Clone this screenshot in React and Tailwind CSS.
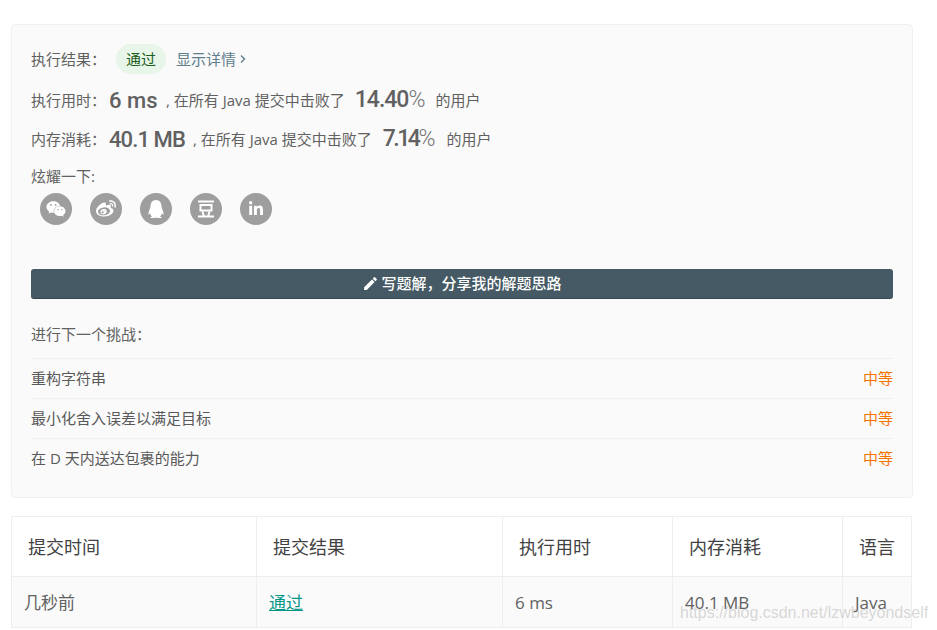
import React from "react";
import { FaWeixin, FaWeibo, FaQq, FaLinkedinIn } from "react-icons/fa";
import { MdEdit } from "react-icons/md";

const FONT = { fontFamily: '"Open Sans","Noto Sans CJK SC",sans-serif' };

function Douban() {
  return (
    <svg width="20" height="20" viewBox="0 0 20 20" fill="none" stroke="white" strokeWidth="2">
      <path d="M2 2.5h16" />
      <rect x="4.5" y="6" width="11" height="5.5" />
      <path d="M2 17.5h16M6.5 12.5l1.3 4.5M13.5 12.5l-1.3 4.5" />
    </svg>
  );
}

function Social({ children }) {
  return <div className="w-8 h-8 rounded-full bg-[#9e9e9e] flex items-center justify-center text-white">{children}</div>;
}

function Num({ children, className = "" }) {
  return <span className={`text-[22px] font-medium text-[#616161] font-['Roboto'] ${className}`}>{children}</span>;
}

function Pct({ v, className = "" }) {
  return (
    <span className={`text-[23px] text-[#616161] font-['Roboto'] font-medium ${className}`}>
      {v}<span className="font-light text-[#757575] tracking-normal">%</span>
    </span>
  );
}

function Next({ title }) {
  return (
    <div className="h-10 border-t border-[#f0f0f0] flex items-center justify-between text-[15px] text-[#595959]">
      <span>{title}</span>
      <span className="text-[#f27400]">中等</span>
    </div>
  );
}

const th = "border border-[#eeeeee] text-left font-normal text-[18px] text-[#424242] pl-4 pr-0 pt-[2px]";
const td = "border border-[#eeeeee] text-[17px] text-[#616161] pl-3 pt-[2px]";

export default function App() {
  return (
    <div style={FONT} className="relative w-[937px] h-[630px] overflow-hidden bg-white pt-6 pl-[11px]">
      <div className="w-[902px] h-[474px] rounded border border-[#f0f0f0] bg-[#fafafa] px-[19px] text-[15px] text-[#616161]">
        <div className="flex items-center h-[30px] mt-[19px]">
          <span className="w-[85px]">执行结果：</span>
          <span className="w-[50px] h-[30px] rounded-full bg-[#e8f5e9] text-[#1b5e20] flex items-center justify-center">通过</span>
          <span className="ml-[10px] text-[#607d8b]">显示详情</span>
          <svg width="8" height="10" viewBox="0 0 8 10" fill="none" stroke="#607d8b" strokeWidth="1.4" className="ml-[3px]"><path d="M2 1.5 5.5 5 2 8.5" /></svg>
        </div>
        <div className="flex items-center h-[39px] mt-[7px]">
          <span className="w-[78px]">执行用时：</span>
          <Num className="w-[57px]">6 ms</Num>
          <span>, 在所有 Java 提交中击败了</span>
          <span className="ml-[10px]"><Pct v="14.40" className="tracking-[-1px]" /></span>
          <span className="ml-[10px]">的用户</span>
        </div>
        <div className="flex items-center h-[39px]">
          <span className="w-[78px]">内存消耗：</span>
          <Num className="w-[84px] tracking-[-0.9px]">40.1 MB</Num>
          <span>, 在所有 Java 提交中击败了</span>
          <span className="ml-[11px]"><Pct v="7.14" className="tracking-[-2.5px]" /></span>
          <span className="ml-[11px]">的用户</span>
        </div>
        <div className="h-5 mt-[7px] flex items-center">炫耀一下:</div>
        <div className="flex gap-[18px] pl-[9px] mt-[7px]">
          <Social><FaWeixin size={20} /></Social>
          <Social><FaWeibo size={20} /></Social>
          <Social><FaQq size={18} /></Social>
          <Social><Douban /></Social>
          <Social><FaLinkedinIn size={16} /></Social>
        </div>
        <button className="mt-[44px] w-full h-[30px] rounded-[3px] bg-[#455a64] border-b border-[#37474f] text-white text-[15px] font-medium flex items-center justify-center gap-[2px]">
          <MdEdit size={17} />
          <span>写题解，分享我的解题思路</span>
        </button>
        <div className="h-5 mt-[25px] mb-[14px] flex items-center">进行下一个挑战：</div>
        <Next title="重构字符串" />
        <Next title="最小化舍入误差以满足目标" />
        <Next title="在 D 天内送达包裹的能力" />
      </div>

      <table className="mt-[18px] w-[900px] border-collapse table-fixed">
        <colgroup>
          <col className="w-[245px]" />
          <col className="w-[246px]" />
          <col className="w-[170px]" />
          <col className="w-[170px]" />
          <col className="w-[69px]" />
        </colgroup>
        <thead>
          <tr className="h-[60px]">
            <th className={th}>提交时间</th>
            <th className={th}>提交结果</th>
            <th className={th}>执行用时</th>
            <th className={th}>内存消耗</th>
            <th className={th}>语言</th>
          </tr>
        </thead>
        <tbody>
          <tr className="h-[51px] bg-[#fafafa]">
            <td className={td}>几秒前</td>
            <td className={td}><span className="text-[#009688] underline underline-offset-1 decoration-1">通过</span></td>
            <td className={td}>6 ms</td>
            <td className={td}>40.1 MB</td>
            <td className={td}>Java</td>
          </tr>
        </tbody>
      </table>

      <div className="absolute left-[680px] top-[603px] text-[16px] leading-5 whitespace-nowrap text-[#9e9e9e]/40 font-['Liberation_Sans']">https://blog.csdn.net/lzwbeyondself</div>
    </div>
  );
}
